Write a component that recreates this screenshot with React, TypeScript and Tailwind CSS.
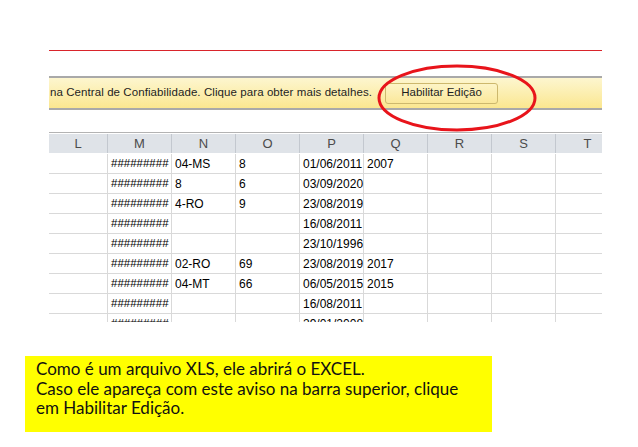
import React from 'react';

const COLS = ['L', 'M', 'N', 'O', 'P', 'Q', 'R', 'S', 'T'];
const HASH = '#########';

const ROWS: string[][] = [
  ['', HASH, '04-MS', '8', '01/06/2011', '2007', '', '', ''],
  ['', HASH, '8', '6', '03/09/2020', '', '', '', ''],
  ['', HASH, '4-RO', '9', '23/08/2019', '', '', '', ''],
  ['', HASH, '', '', '16/08/2011', '', '', '', ''],
  ['', HASH, '', '', '23/10/1996', '', '', '', ''],
  ['', HASH, '02-RO', '69', '23/08/2019', '2017', '', '', ''],
  ['', HASH, '04-MT', '66', '06/05/2015', '2015', '', '', ''],
  ['', HASH, '', '', '16/08/2011', '', '', '', ''],
  ['', HASH, '', '', '29/01/2008', '', '', '', ''],
];

function colWidth(i: number) {
  return i === 0 ? 'w-[59px]' : 'w-[64px]';
}

export default function App() {
  return (
    <div className="relative w-[638px] h-[447px] bg-white overflow-hidden font-['Liberation_Sans',Arial,sans-serif]">
      <div className="ml-[49px] w-[553px] pt-[50px]">
        {/* red rule */}
        <div className="h-px bg-[#d9242b]" />

        {/* protected view bar */}
        <div className="mt-[25px] h-[34px] border-y-2 border-[#a9a9a9] bg-gradient-to-b from-[#fdf6cf] to-[#fbe78f] flex items-center">
          <span className="pl-px text-[11.5px] tracking-[0.08px] text-[#1e1e1e] whitespace-nowrap">
            na Central de Confiabilidade. Clique para obter mais detalhes.
          </span>
          <div className="ml-[13px] w-[113px] h-[21px] border border-[#cdb86d] rounded-[3px] bg-gradient-to-b from-[#fdf4c6] to-[#fbe89a] flex items-center justify-center text-[11.5px] text-[#1e1e1e]">
            Habilitar Edição
          </div>
        </div>

        {/* sheet */}
        <div className="mt-[22px] h-[190px] overflow-hidden border-t border-[#b3b3b3]">
          <div className="flex h-[21px] bg-[#dfe3e8] border-t border-white border-b border-[#b6bcc6]">
            {COLS.map((c, i) => (
              <div
                key={c}
                className={`${colWidth(i)} shrink-0 border-r border-[#c3c8cf] flex items-center justify-center text-[13px] text-[#4b4b4b]`}
              >
                {c}
              </div>
            ))}
          </div>
          {ROWS.map((row, r) => (
            <div key={r} className="flex h-[20px] border-b border-[#d9d9d9]">
              {row.map((cell, i) => (
                <div
                  key={i}
                  className={`${colWidth(i)} shrink-0 border-r border-[#d9d9d9] pl-[3px] flex items-center text-black whitespace-nowrap ${
                    i === 1 ? 'text-[11.5px]' : 'text-[12px]'
                  }`}
                >
                  {cell}
                </div>
              ))}
            </div>
          ))}
        </div>
      </div>

      {/* caption */}
      <div className="ml-[25px] mt-[34px] w-[467px] h-[76px] bg-[#ffff00] pl-[11px] pt-[3px] text-[17px] leading-[19.5px] text-[#111] font-['Lato',sans-serif]">
        Como é um arquivo XLS, ele abrirá o EXCEL.
        <br />
        Caso ele apareça com este aviso na barra superior, clique
        <br />
        em Habilitar Edição.
      </div>

      {/* highlight ellipse */}
      <svg className="absolute left-0 top-0 pointer-events-none" width="638" height="447">
        <ellipse cx="457" cy="98" rx="78" ry="32" fill="none" stroke="#e8141b" strokeWidth="3" />
      </svg>
    </div>
  );
}
